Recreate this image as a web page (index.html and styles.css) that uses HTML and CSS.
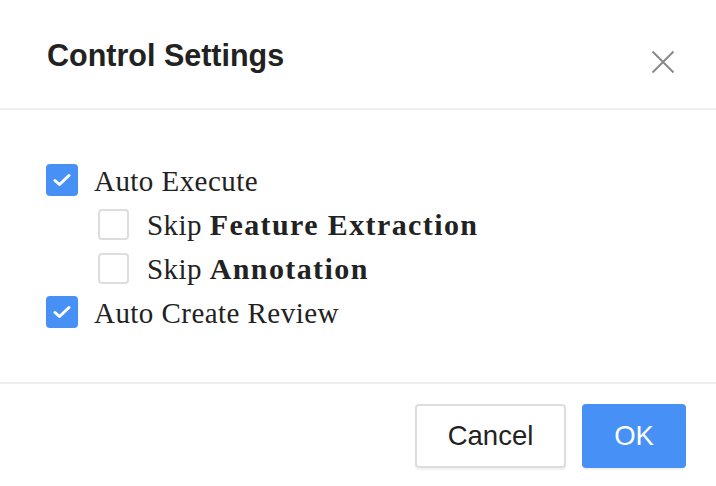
FILE: index.html
```html
<!DOCTYPE html>
<html>
<head>
<meta charset="utf-8">
<link rel="stylesheet" href="styles.css">
</head>
<body>
<div class="dialog">
  <div class="header">
    <h1 class="title">Control Settings</h1>
    <button class="close" aria-label="Close">
      <svg width="24" height="24" viewBox="0 0 24 24"><path d="M1.5 1.5 L22.5 22.5 M22.5 1.5 L1.5 22.5" stroke="#8a8a8a" stroke-width="2" fill="none"/></svg>
    </button>
  </div>
  <div class="content">
    <label class="row">
      <span class="box checked"><svg width="18" height="14" viewBox="0 0 18 14"><path d="M2 7.5 L6.5 11.5 L16 2.5" stroke="#fff" stroke-width="3" fill="none" stroke-linecap="round" stroke-linejoin="round"/></svg></span>
      <span class="label">Auto Execute</span>
    </label>
    <label class="row sub">
      <span class="box"></span>
      <span class="label">Skip <b>Feature Extraction</b></span>
    </label>
    <label class="row sub">
      <span class="box"></span>
      <span class="label">Skip <b>Annotation</b></span>
    </label>
    <label class="row">
      <span class="box checked"><svg width="18" height="14" viewBox="0 0 18 14"><path d="M2 7.5 L6.5 11.5 L16 2.5" stroke="#fff" stroke-width="3" fill="none" stroke-linecap="round" stroke-linejoin="round"/></svg></span>
      <span class="label">Auto Create Review</span>
    </label>
  </div>
  <div class="footer">
    <button class="btn cancel">Cancel</button>
    <button class="btn ok">OK</button>
  </div>
</div>
</body>
</html>
```
FILE: styles.css
```css
html, body {
  margin: 0;
  padding: 0;
  background: #fff;
}
.dialog {
  width: 716px;
  height: 486px;
  background: #fff;
}
.header {
  height: 108px;
  border-bottom: 2px solid #eeeeee;
  display: flex;
  align-items: center;
  justify-content: space-between;
  padding: 0 41px 0 47px;
  box-sizing: content-box;
}
.title {
  margin: 0;
  font-family: "Liberation Sans", Arial, sans-serif;
  font-weight: 700;
  font-size: 30.5px;
  color: #222;
  position: relative;
  top: 1px;
}
.close {
  border: 0;
  background: none;
  padding: 0;
  width: 24px;
  height: 24px;
  display: flex;
  margin-top: 16px;
}
.content {
  padding: 54px 46px;
  display: flex;
  flex-direction: column;
  gap: 12px;
  border-bottom: 2px solid #eeeeee;
}
.row {
  display: flex;
  align-items: center;
  height: 32px;
  gap: 16px;
  font-family: "Liberation Serif", Georgia, serif;
  font-size: 29px;
  letter-spacing: 0.45px;
  color: #222;
}
.row.sub {
  padding-left: 52px;
  gap: 18px;
}
.box {
  width: 32px;
  height: 32px;
  box-sizing: border-box;
  border-radius: 4px;
  border: 2px solid #dddddd;
  background: #fff;
  display: flex;
  align-items: center;
  justify-content: center;
  flex: none;
}
.row.sub .box {
  width: 31px;
  height: 31px;
}
.box.checked {
  background: #4790f6;
  border-color: #4790f6;
}
.label {
  position: relative;
  top: 1px;
}
.label b {
  font-weight: 700;
  font-size: 30px;
  letter-spacing: 1.4px;
}
.footer {
  display: flex;
  justify-content: flex-end;
  gap: 16px;
  padding: 20px 30px 0 0;
}
.btn {
  height: 64px;
  border-radius: 4px;
  font-family: "Liberation Sans", Arial, sans-serif;
  font-size: 27.5px;
  box-shadow: 0 2px 2px rgba(0,0,0,0.06);
  padding: 0;
}
.cancel {
  width: 151px;
  background: #fff;
  border: 2px solid #dddddd;
  color: #222;
}
.ok {
  width: 104px;
  background: #4790f6;
  border: 0;
  color: #fff;
}
```
